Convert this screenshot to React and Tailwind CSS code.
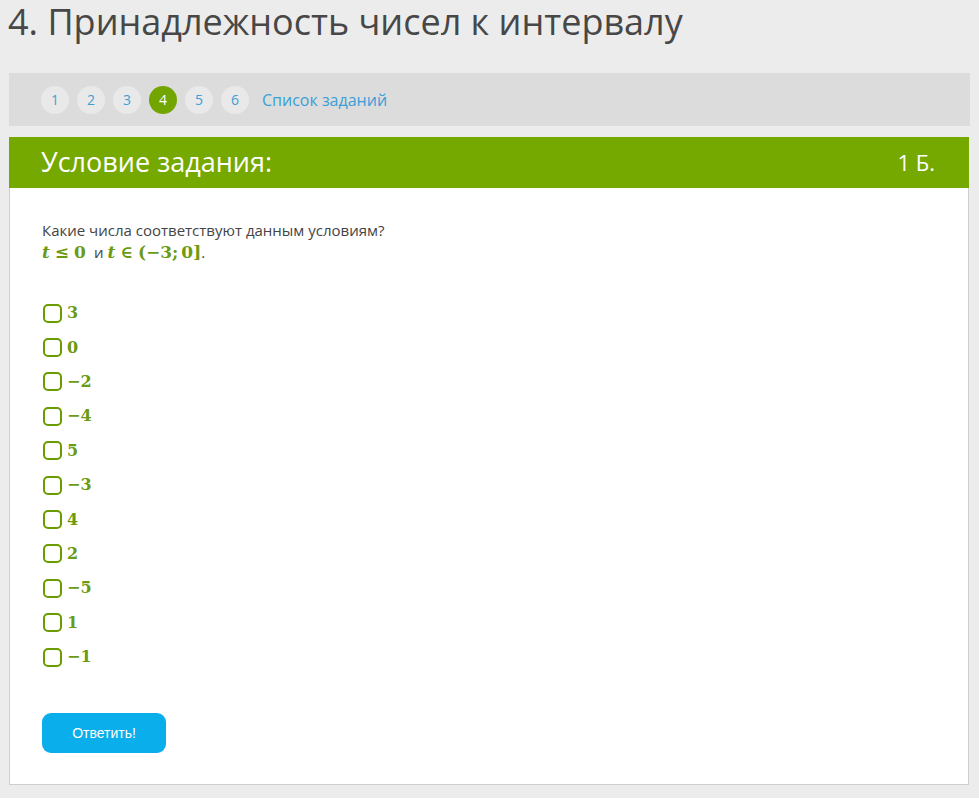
import React from 'react';

const tabs = [1, 2, 3, 4, 5, 6];
const options = ['3', '0', '\u22122', '\u22124', '5', '\u22123', '4', '2', '\u22125', '1', '\u22121'];

const Option = ({ value }) => (
  <label className="flex items-center h-[34.4px] cursor-pointer">
    <span className="w-[19px] h-[19px] ml-[1px] rounded-[5px] border-2 border-[#6a9c00] bg-white" />
    <span className="ml-[5px] text-[16px] font-bold text-[#6b9a14] font-['DejaVu_Serif',serif]">
      {value}
    </span>
  </label>
);

const App = () => {
  return (
    <div className="min-h-[799px] bg-[#ececec] font-['Open_Sans',sans-serif] pb-[13px]">
      {/* Title */}
      <h1 className="pl-[8px] -mt-[3px] h-[76px] text-[36px] leading-[50px] text-[#474747]">
        4. Принадлежность чисел к интервалу
      </h1>

      {/* Navigation */}
      <div className="mx-[9px] h-[53px] bg-[#dcdcdc] flex items-center pl-[32px]">
        <div className="flex items-center gap-[8px]">
          {tabs.map((n) => (
            <span
              key={n}
              className={`w-[28px] h-[28px] rounded-full flex items-center justify-center text-[14px] ${
                n === 4 ? 'bg-[#73a500] text-white' : 'bg-[#e9e9e9] text-[#3c9fd6]'
              }`}
            >
              {n}
            </span>
          ))}
        </div>
        <a className="ml-[13px] text-[16px] text-[#3a9fd8]">Список заданий</a>
      </div>

      {/* Task */}
      <div className="mx-[9px] mt-[11px] w-[960px]">
        <div className="h-[51px] bg-[#76a900] flex items-center justify-between pl-[32px] pr-[34px] text-white">
          <span className="text-[27px]">Условие задания:</span>
          <span className="text-[22px]">1 Б.</span>
        </div>
        <div className="bg-white border border-[#cfcfcf] border-t-0 h-[597px] px-[32px] pt-[32px]">
          <p className="text-[15px] leading-[21px] text-[#444]">Какие числа соответствуют данным условиям?</p>
          <p className="text-[15px] leading-[22px] text-[#444] flex items-baseline">
            <span className="font-['DejaVu_Serif',serif] text-[17px] font-bold text-[#6b9a14]">
              <i>t</i>
              <span className="mx-[5px]">≤</span>0
            </span>
            <span className="ml-[8px]">и</span>
            <span className="ml-[4px] font-['DejaVu_Serif',serif] text-[17px] font-bold text-[#6b9a14]">
              <i>t</i>
              <span className="mx-[5px]">∈</span>(−3;<span className="ml-[3px]">0]</span>
            </span>
            <span>.</span>
          </p>

          <div className="mt-[33px] flex flex-col">
            {options.map((o, i) => (
              <Option key={i} value={o} />
            ))}
          </div>

          <button className="mt-[39px] w-[124px] h-[40px] rounded-[9px] bg-[#0aaeeb] text-white text-[14px] font-['Liberation_Sans',sans-serif]">
            Ответить!
          </button>
        </div>
      </div>
    </div>
  );
};

export default App;
